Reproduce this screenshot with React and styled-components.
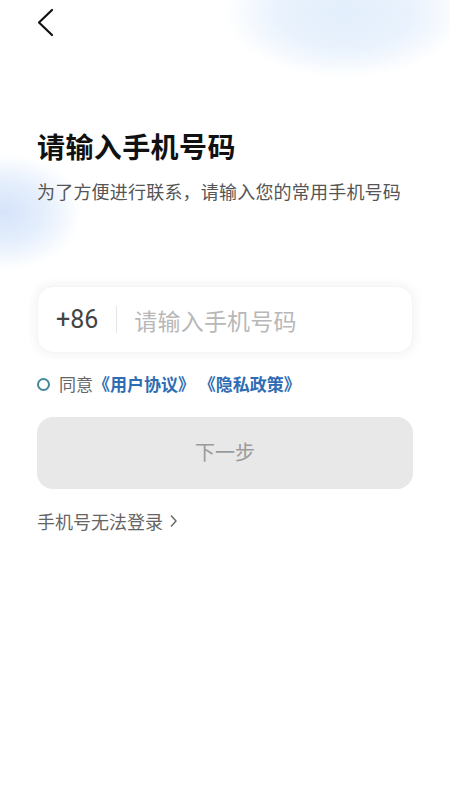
import React from "react";
import styled, { createGlobalStyle } from "styled-components";

const Global = createGlobalStyle`
  html, body { margin: 0; padding: 0; background: #ffffff; }
  body { font-family: "Noto Sans CJK SC", "Noto Sans", sans-serif; }
  * { box-sizing: border-box; }
`;

const Page = styled.div`
  width: 450px;
  min-height: 800px;
  padding: 0 37px;
  background:
    radial-gradient(ellipse 120px 66px at 345px 12px, #e3effc 0%, #e9f2fd 55%, rgba(242,248,254,0) 100%),
    radial-gradient(ellipse 78px 58px at 4px 212px, #d6e4fa 0%, #e4eefc 50%, rgba(244,248,255,0) 100%),
    #ffffff;
  display: flex;
  flex-direction: column;
`;

const Header = styled.div`
  height: 46px;
  display: flex;
  align-items: center;
`;

const BackButton = styled.button`
  border: 0;
  background: none;
  padding: 0;
  width: 20px;
  height: 30px;
  display: flex;
  align-items: center;
  cursor: pointer;
  margin-top: -2px;
`;

const Title = styled.h1`
  margin: 82px 0 0;
  font-size: 28px;
  line-height: 36px;
  font-weight: 700;
  color: #111;
  letter-spacing: 0.4px;
`;

const Subtitle = styled.p`
  margin: 14px 0 0;
  font-size: 18px;
  line-height: 26px;
  color: #555;
  letter-spacing: 0.2px;
`;

const InputCard = styled.div`
  margin-top: 82px;
  height: 67px;
  border-radius: 16px;
  background: #fff;
  box-shadow: 0 0 10px 3px rgba(0, 0, 0, 0.045);
  border: 1px solid #f5f5f5;
  display: flex;
  align-items: center;
  padding: 0 18px;
`;

const Code = styled.span`
  font-family: "Roboto", "Noto Sans", sans-serif;
  font-size: 25px;
  color: #444;
`;

const Divider = styled.span`
  width: 1px;
  height: 27px;
  background: #e4e4e4;
  margin: 0 17px 0 18px;
`;

const Placeholder = styled.span`
  font-size: 23px;
  color: #b8b8b8;
  letter-spacing: 0.2px;
`;

const Agreement = styled.div`
  margin-top: 19px;
  display: flex;
  align-items: center;
  font-size: 17px;
  line-height: 24px;
`;

const Radio = styled.span`
  width: 13px;
  height: 13px;
  border-radius: 50%;
  border: 2px solid #43899a;
  margin: 0 9px 0 0;
`;

const Plain = styled.span`
  color: #666;
`;

const LinkText = styled.span`
  color: #2e6cb3;
  font-weight: 700;
  white-space: pre;
`;

const NextButton = styled.button`
  margin-top: 21px;
  height: 72px;
  border: 0;
  border-radius: 16px;
  background: #e8e8e8;
  color: #9a9a9a;
  font-family: "Noto Sans CJK SC", sans-serif;
  font-size: 20px;
  padding: 0 0 4px;
  width: 100%;
`;

const Help = styled.div`
  margin-top: 19px;
  display: flex;
  align-items: center;
  gap: 6px;
  font-size: 18px;
  line-height: 26px;
  color: #666;
`;

export default function App() {
  return (
    <>
      <Global />
      <Page>
        <Header>
          <BackButton aria-label="返回">
            <svg width="18" height="30" viewBox="0 0 18 30">
              <path d="M15 3 L2 15.5 L15 28" fill="none" stroke="#111" strokeWidth="2.2" strokeLinecap="round" strokeLinejoin="round" />
            </svg>
          </BackButton>
        </Header>
        <Title>请输入手机号码</Title>
        <Subtitle>为了方便进行联系，请输入您的常用手机号码</Subtitle>
        <InputCard>
          <Code>+86</Code>
          <Divider />
          <Placeholder>请输入手机号码</Placeholder>
        </InputCard>
        <Agreement>
          <Radio />
          <Plain>同意</Plain>
          <LinkText>《用户协议》 《隐私政策》</LinkText>
        </Agreement>
        <NextButton>下一步</NextButton>
        <Help>
          手机号无法登录
          <svg width="9" height="14" viewBox="0 0 9 14">
            <path d="M2 1.5 L7 7 L2 12.5" fill="none" stroke="#666" strokeWidth="1.4" />
          </svg>
        </Help>
      </Page>
    </>
  );
}
